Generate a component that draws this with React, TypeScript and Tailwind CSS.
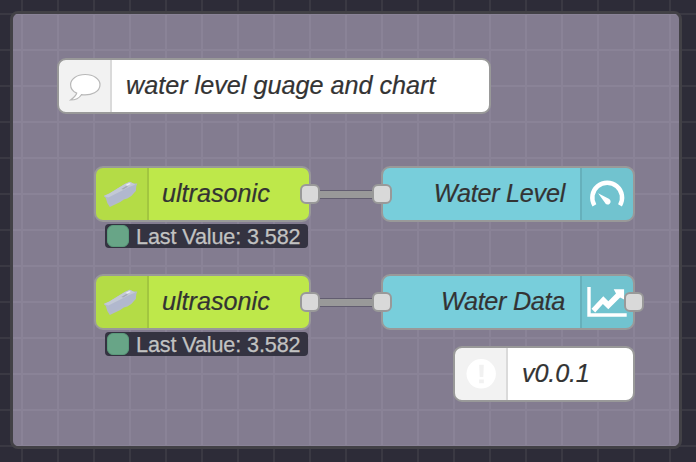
import type { ReactNode } from "react";

const labelFont =
  "font-['Liberation_Sans',Arial,sans-serif] text-[25.2px] leading-[50px] italic text-[#333] whitespace-pre [-webkit-text-stroke:0.2px_#333]";

function Port({ className }: { className: string }) {
  return (
    <div
      className={`absolute top-[16px] size-5 rounded-[6px] border-2 border-[#999] bg-[#d9d9d9] ${className}`}
    />
  );
}

function NodeIcon({ children, side }: { children: ReactNode; side: "left" | "right" }) {
  return (
    <div
      className={`flex w-[53px] shrink-0 items-center justify-center bg-black/5 ${
        side === "left"
          ? "rounded-l-[7px] border-r-2 border-black/10"
          : "rounded-r-[7px] border-l-2 border-black/10"
      }`}
    >
      {children}
    </div>
  );
}

function FlowNode({ className, children }: { className: string; children: ReactNode }) {
  return (
    <div className={`absolute flex h-14 rounded-[9px] border-2 border-[#999] ${className}`}>
      {children}
    </div>
  );
}

function SensorIcon() {
  return (
    <svg width="50" height="50" viewBox="0.7 0.6 50 50">
      <path d="M7.5 27.5 L13 25 L28.5 15.5 L33.5 13.3 L37 15 L41 15.2 L40 17.5 L39.5 22.5 L35 27.5 L31 30 L27.5 31 L24 33.5 L13.5 38.5 L11 34.5 L9.5 29.5 Z" fill="#b3bacb" />
      <path d="M7.5 27.5 L13 25 L28.5 15.5 L33.5 13.3 L39 16.2 L33 18.5 L12 29.2 Z" fill="#c3c9d6" />
      <path d="M12.5 29.5 L34 18.6 L39.5 17 L39.2 22.5 L33 26.5 L14 36 Z" fill="#b1b8ce" />
      <path d="M25 20.5 L30 17.5 L32 18 L27 21 Z" fill="#a5aab6" />
      <path d="M29 16.5 L33 14.6 L34.5 15.5 L31 17 Z" fill="#eceff1" />
    </svg>
  );
}

function Status({ className }: { className: string }) {
  return (
    <div className={`absolute flex h-6 w-[203px] items-center rounded-[4px] bg-[#343341] ${className}`}>
      <div className="ml-[2px] size-[22px] shrink-0 rounded-[6px] border border-[#5a9a7b] bg-[#68a587]" />
      <span className="ml-[7px] pt-[2px] font-['Liberation_Sans',Arial,sans-serif] text-[21.6px] leading-[22px] tracking-[-0.12px] whitespace-pre text-[#c2c2c2] [-webkit-text-stroke:0.25px_#c2c2c2]">
        Last Value: 3.582
      </span>
    </div>
  );
}

function Ultrasonic({ className }: { className: string }) {
  return (
    <FlowNode className={`left-[94px] w-[217px] bg-[#bee84a] ${className}`}>
      <NodeIcon side="left">
        <SensorIcon />
      </NodeIcon>
      <span className={`ml-[13px] ${labelFont}`}>ultrasonic</span>
      <Port className="left-[204px]" />
    </FlowNode>
  );
}

function Wire({ className }: { className: string }) {
  return (
    <div className={`absolute left-[318px] h-[9px] w-[56px] border-y border-[#625d70] bg-[#999] ${className}`} />
  );
}

export default function App() {
  return (
    <main className="relative h-[462px] w-[696px] overflow-hidden bg-[#2d2c38]">
      <div className="absolute inset-0 bg-[linear-gradient(to_right,#3a3943_2px,transparent_2px),linear-gradient(to_bottom,#3a3943_2px,transparent_2px)] bg-size-[36px_36px] bg-position-[21px_13px]" />
      <section className="absolute top-[11px] left-[10px] h-[438px] w-[672px] rounded-[8px] border-3 border-[#424146] bg-[#837c90]">
        <div className="h-full rounded-[5px] bg-[linear-gradient(to_right,#8a8397_2px,transparent_2px),linear-gradient(to_bottom,#8a8397_2px,transparent_2px)] bg-size-[36px_36px] bg-position-[8px_-1px]" />
      </section>

      <FlowNode className="top-[58px] left-[57px] w-[434px] bg-white">
        <NodeIcon side="left">
          <svg width="50" height="50" viewBox="0.8 2 50 50">
            <path
              d="M26 15.5 C17.5 15.5 11.4 19.8 11.4 25.7 C11.4 29.2 13.6 32.4 17.5 34.1 C17 36.6 14 39 11.4 41 C15.5 41 20 39.2 22.2 35.7 C32.5 37 40.8 32.4 40.8 25.7 C40.8 19.8 34.3 15.5 26 15.5 Z"
              fill="white"
              stroke="#b8b8b8"
              strokeWidth="1.2"
            />
          </svg>
        </NodeIcon>
        <span className={`ml-[14px] ${labelFont}`}>water level guage and chart</span>
      </FlowNode>

      <Wire className="top-[190px]" />
      <Wire className="top-[298px]" />

      <Ultrasonic className="top-[166px]" />
      <Status className="top-[224px] left-[105px]" />
      <Ultrasonic className="top-[274px]" />
      <Status className="top-[332px] left-[105px]" />

      <FlowNode className="top-[166px] left-[381px] w-[254px] justify-end bg-[#78cedb]">
        <span className={`mr-[15px] tracking-[-0.25px] ${labelFont}`}>Water Level</span>
        <NodeIcon side="right">
          <svg width="50" height="50" viewBox="0.5 0 50 50">
            <path d="M11.9 36.3 A14.9 14.9 0 1 1 37.5 36.3" fill="none" stroke="white" strokeWidth="4.4" />
            <path d="M15.6 24.2 L26.3 29.8 A3 3 0 1 1 22.3 33.6 Z" fill="white" />
          </svg>
        </NodeIcon>
        <Port className="-left-[11px]" />
      </FlowNode>

      <FlowNode className="top-[274px] left-[381px] w-[254px] justify-end bg-[#78cedb]">
        <span className={`mr-[15px] tracking-[-0.28px] ${labelFont}`}>Water Data</span>
        <NodeIcon side="right">
          <svg width="50" height="50" viewBox="0.5 0 50 50">
            <path d="M6.5 10 V38 H44.2" fill="none" stroke="white" strokeWidth="3.4" />
            <path d="M9 31.7 L20.8 19.3 L25.8 24.3 L33.5 16.6 L31.2 12.2 H41.6 V22.6 L37.6 20.4 L25.8 32.3 L20.4 26.9 L12.7 35.6 Z" fill="white" />
          </svg>
        </NodeIcon>
        <Port className="-left-[11px]" />
        <Port className="left-[241px]" />
      </FlowNode>

      <FlowNode className="top-[346px] left-[453px] w-[182px] bg-white">
        <NodeIcon side="left">
          <svg width="50" height="50" viewBox="0 0 50 50">
            <circle cx="25.2" cy="24.8" r="14.7" fill="white" />
            <path d="M23.2 15.7 H27.8 L27.3 28 H23.7 Z M23.2 30.5 H27.8 V34.2 H23.2 Z" fill="#f1f1f1" />
          </svg>
        </NodeIcon>
        <span className={`ml-[14px] tracking-[-0.15px] ${labelFont}`}>v0.0.1</span>
      </FlowNode>
    </main>
  );
}
